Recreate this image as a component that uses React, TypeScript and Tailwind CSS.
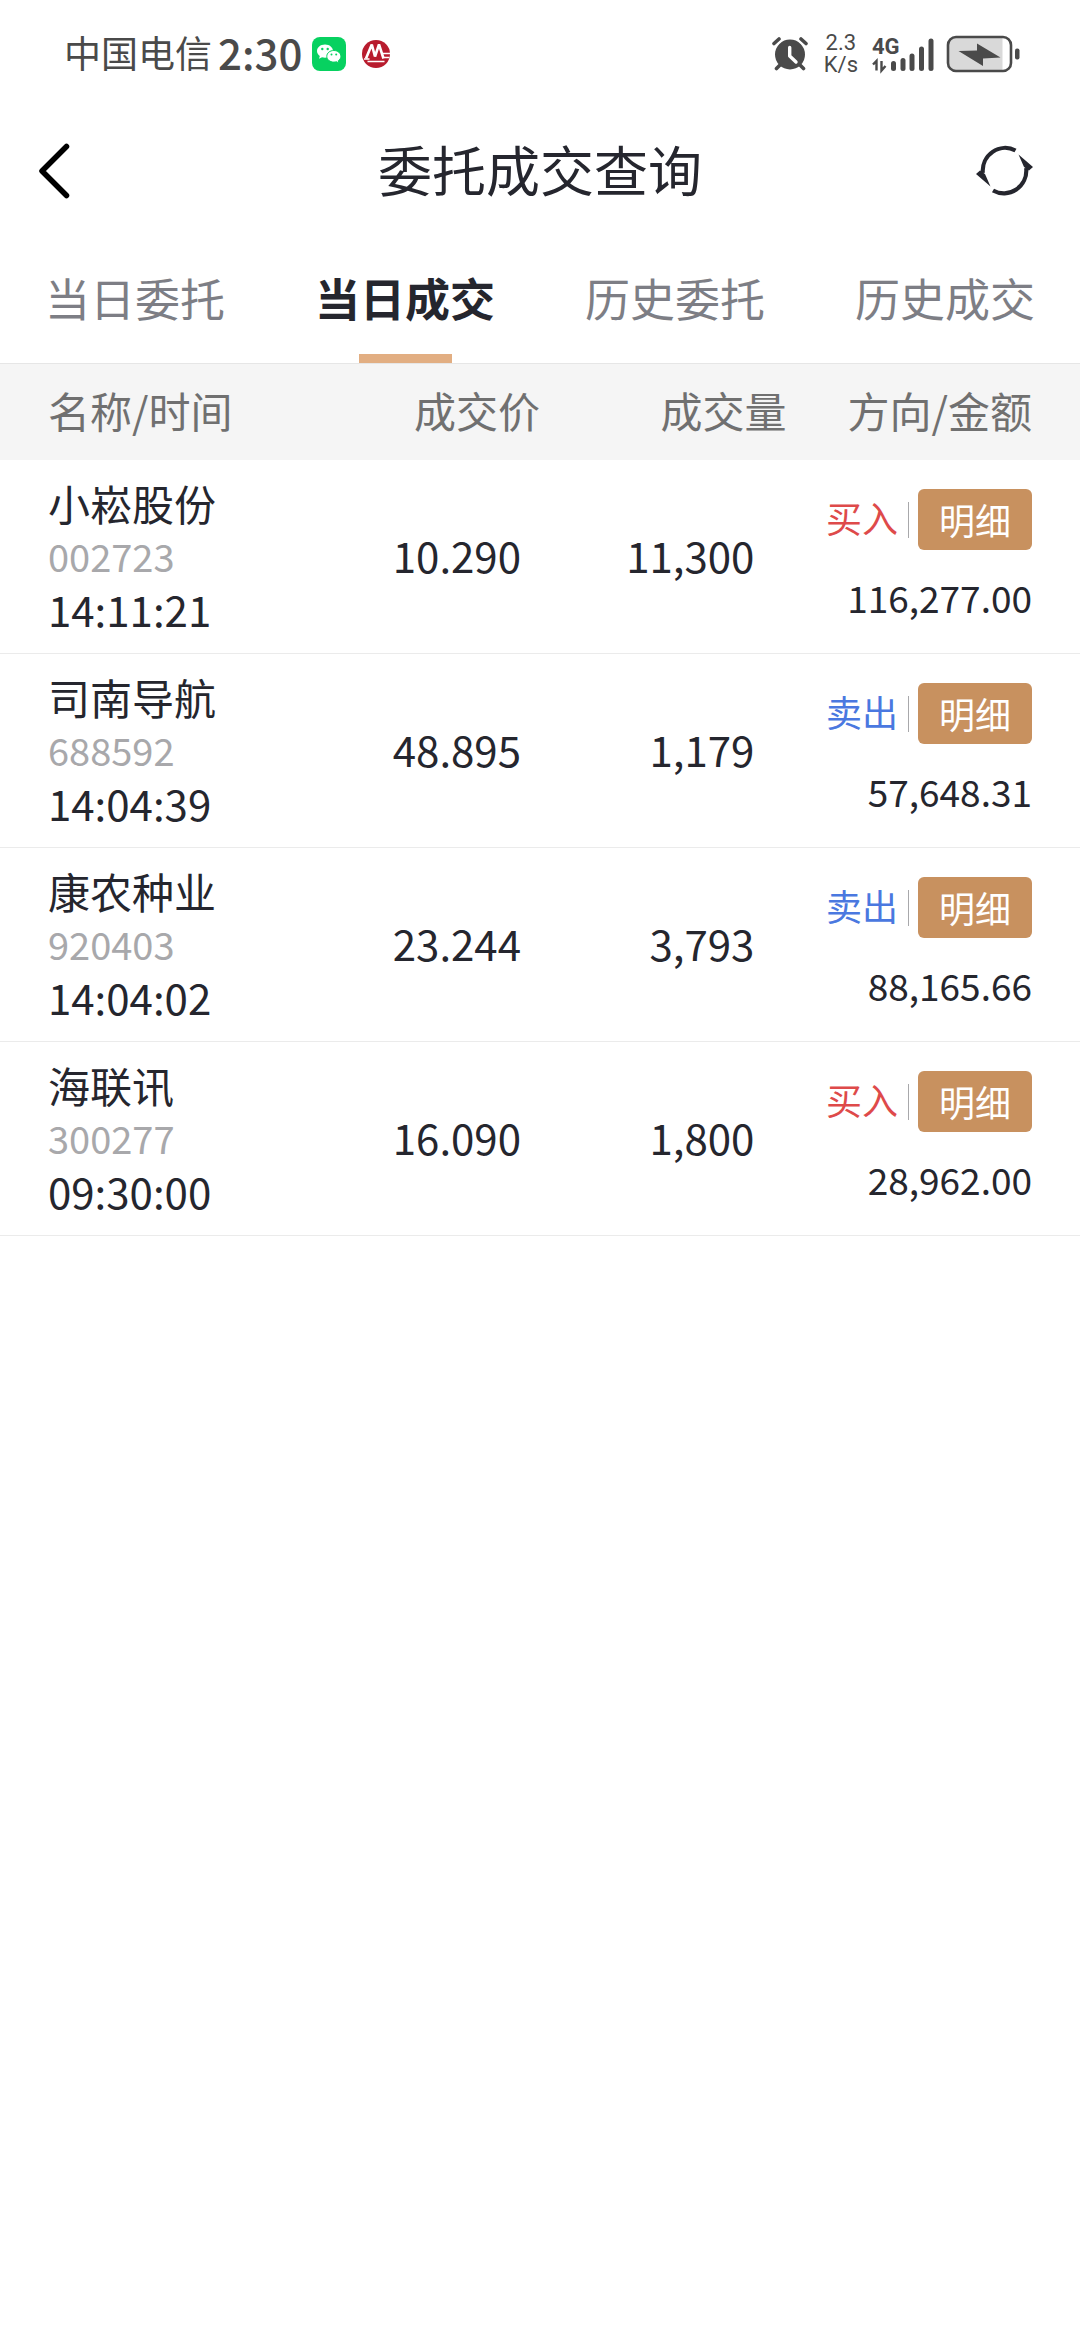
import { useState } from 'react'

type Side = 'buy' | 'sell'

interface Trade {
  name: string
  code: string
  time: string
  price: string
  volume: string
  side: Side
  amount: string
}

const TABS = ['当日委托', '当日成交', '历史委托', '历史成交']

const TRADES: Trade[] = [
  { name: '小崧股份', code: '002723', time: '14:11:21', price: '10.290', volume: '11,300', side: 'buy', amount: '116,277.00' },
  { name: '司南导航', code: '688592', time: '14:04:39', price: '48.895', volume: '1,179', side: 'sell', amount: '57,648.31' },
  { name: '康农种业', code: '920403', time: '14:04:02', price: '23.244', volume: '3,793', side: 'sell', amount: '88,165.66' },
  { name: '海联讯', code: '300277', time: '09:30:00', price: '16.090', volume: '1,800', side: 'buy', amount: '28,962.00' },
]

function WeChatIcon() {
  return (
    <svg width="34" height="34" viewBox="0 0 34 34" aria-hidden="true">
      <rect width="34" height="34" rx="8" fill="#07d160" />
      <path d="M13 7.5c-4.6 0-8 2.900-8 6.600 0 2.100 1.100 3.800 2.800 5l-.8 2.600 3-1.500c1 .3 2 .5 3 .5 4.600 0 8-2.900 8-6.600s-3.400-6.600-8-6.600z" fill="#fff" />
      <path d="M21.800 13.500c-4 0-7 2.600-7 5.800s3 5.800 7 5.800c.9 0 1.800-.1 2.600-.4l2.600 1.400-.7-2.300c1.600-1.100 2.600-2.700 2.600-4.500 0-3.200-3.100-5.800-7.100-5.800z" fill="#fff" stroke="#07d160" strokeWidth="1" />
      <circle cx="10.300" cy="12" r="1.200" fill="#07d160" />
      <circle cx="15.700" cy="12" r="1.200" fill="#07d160" />
      <circle cx="19.500" cy="17.500" r="1" fill="#07d160" />
      <circle cx="24.200" cy="17.500" r="1" fill="#07d160" />
    </svg>
  )
}

function BankIcon() {
  return (
    <svg width="28" height="28" viewBox="0 0 28 28" aria-hidden="true">
      <circle cx="14" cy="14" r="14" fill="#b81c2e" />
      <path d="M4 18.500 9.800 4.500 13 16.500 17 4.500 21.500 18.500" fill="none" stroke="#fff" strokeWidth="2.600" strokeLinejoin="bevel" />
      <path d="M2 19h5.500M5.500 21.500h17M21 13.500h7M21.500 17.500h6" stroke="#fff" strokeWidth="1.600" />
    </svg>
  )
}

function AlarmIcon() {
  return (
    <svg width="36" height="34" viewBox="0 0 36 34" fill="none" stroke="#4a4a4a" strokeLinecap="round" aria-hidden="true">
      <path d="M2 6.500 7 2M34 6.500 29 2" strokeWidth="3.600" />
      <path d="M8 28 4.500 31.500M28 28l3.500 3.500" strokeWidth="3.600" />
      <circle cx="18" cy="17.500" r="15" fill="#4a4a4a" stroke="none" />
      <path d="M17.700 10.500v8.500l6.300 6" stroke="#fff" strokeWidth="3.400" strokeLinejoin="round" />
    </svg>
  )
}

function SignalIcon() {
  return (
    <svg width="62" height="48" viewBox="0 -6 62 48" aria-hidden="true">
      <text x="0" y="18" fontFamily="Roboto, sans-serif" fontSize="22" fontWeight="700" fill="#4a4a4a">4G</text>
      <path d="M1 28.500 4.500 25v9.500M9.500 25v9.500l4-4.500" fill="none" stroke="#4a4a4a" strokeWidth="2.400" />
      <g stroke="#4a4a4a" strokeWidth="5" strokeLinecap="round">
        <path d="M21.500 27.500v5" />
        <path d="M31 24.500v8" />
        <path d="M40 20v12.500" />
        <path d="M49.500 13v19.500" />
        <path d="M59 5v27.500" />
      </g>
    </svg>
  )
}

function BatteryIcon() {
  return (
    <svg width="74" height="38" viewBox="0 0 74 38" aria-hidden="true">
      <path d="M10 2.500h46.500v33H10a7 7 0 0 1-7-7v-19a7 7 0 0 1 7-7z" fill="#d9d9d9" />
      <rect x="2" y="2" width="63" height="34" rx="8" fill="none" stroke="#4a4a4a" strokeWidth="2.600" />
      <path d="M12.500 16 31 15.500V8.500L54.500 22.500 37 23.500v7.500z" fill="#4a4a4a" />
      <rect x="69" y="13.500" width="4.500" height="11" rx="2" fill="#4a4a4a" />
    </svg>
  )
}

function StatusBar() {
  return (
    <div className="flex h-27 items-center justify-between pl-16 pr-15 text-[#4a4a4a]">
      <div className="flex items-center">
        <div className="flex items-center pb-1">
          <span className="text-[37px] leading-12">中国电信</span>
          <span className="ml-1.5 text-[42px] leading-12 font-medium">2:30</span>
        </div>
        <span className="ml-2.5"><WeChatIcon /></span>
        <span className="ml-4"><BankIcon /></span>
      </div>
      <div className="flex items-center">
        <AlarmIcon />
        <div className="ml-4 text-center font-[Roboto,sans-serif] text-[22px] leading-[22px]">
          <p>2.3</p>
          <p>K/s</p>
        </div>
        <span className="ml-3.5"><SignalIcon /></span>
        <span className="ml-3"><BatteryIcon /></span>
      </div>
    </div>
  )
}

function RefreshIcon() {
  return (
    <svg width="58" height="52" viewBox="0 0 58 52" aria-hidden="true">
      <path d="M6.800 28A22.500 23 0 0 1 39.500 5.500M17 45.500A22.500 23 0 0 0 50.200 23" fill="none" stroke="#25262e" strokeWidth="4.200" />
      <path d="M0 29 4 25.500 9 29 14.500 41.500zM57 22l-4 3.500-5-3.500-5.500-12.500z" fill="#25262e" />
    </svg>
  )
}

function TradeRow({ trade }: { trade: Trade }) {
  return (
    <tr className="border-b border-[#ebebeb]">
      <td className="pt-4 pb-[18px] pl-12 text-left text-[42px] leading-[53px]">
        <p>{trade.name}</p>
        <p className="text-[38px] leading-[53px] text-[#a8a8ab]">{trade.code}</p>
        <p>{trade.time}</p>
      </td>
      <td className="pr-[19px] pb-1 text-[42px]">{trade.price}</td>
      <td className="pr-[34px] pb-1 text-[42px]">{trade.volume}</td>
      <td className="pr-12">
        <div className="flex items-center justify-end">
          <span className={`pb-1 text-[36px] leading-[57px] ${trade.side === 'buy' ? 'text-[#de4a4a]' : 'text-[#4a78e0]'}`}>
            {trade.side === 'buy' ? '买入' : '卖出'}
          </span>
          <span className="ml-2.5 h-9 w-px bg-[#a8a8ab]" />
          <button type="button" className="ml-[9px] rounded-md bg-[#c8915f] px-[21px] text-[36px] leading-[61px] text-white">
            明细
          </button>
        </div>
        <p className="mt-5 text-[37px] leading-[54px]">{trade.amount}</p>
      </td>
    </tr>
  )
}

export default function App() {
  const [active, setActive] = useState(1)

  return (
    <div className="min-h-screen bg-white font-[Noto_Sans_CJK_SC,sans-serif] text-[#25262e]">
      <StatusBar />

      <header className="flex h-[126px] items-center justify-between pr-[46px] pl-[38px]">
        <button type="button" aria-label="返回" className="w-[66px]">
          <svg width="32" height="56" viewBox="0 0 32 56" fill="none" stroke="#000" strokeWidth="5.500" strokeLinecap="round" strokeLinejoin="round">
            <path d="M28.500 3.500 4 28l24.500 24.500" />
          </svg>
        </button>
        <h1 className="pb-1 text-[54px] leading-[60px]">委托成交查询</h1>
        <button type="button" aria-label="刷新">
          <RefreshIcon />
        </button>
      </header>

      <nav className="grid grid-cols-4 border-b border-[#e6e6e6]">
        {TABS.map((tab, i) => (
          <button
            key={tab}
            type="button"
            onClick={() => setActive(i)}
            className={`flex flex-col items-center text-[45px] leading-[60px] ${
              i === active ? 'font-bold' : 'text-[#7d7e85]'
            }`}
          >
            <span className="pt-8.5 pb-[26px]">{tab}</span>
            <span className={`h-[9px] w-[93px] ${i === active ? 'bg-[#e2ae82]' : 'bg-transparent'}`} />
          </button>
        ))}
      </nav>

      <table className="w-full table-fixed text-right">
        <thead className="bg-[#f5f5f5] text-[42px] text-[#707070]">
          <tr className="h-24">
            <th className="w-[30%] pb-1.5 pl-12 text-left font-normal">名称/时间</th>
            <th className="w-[20%] pb-1.5 font-normal">成交价</th>
            <th className="w-[23%] pr-0.5 pb-1.5 font-normal">成交量</th>
            <th className="w-[27%] pr-12 pb-1.5 font-normal">方向/金额</th>
          </tr>
        </thead>
        <tbody>
          {TRADES.map(trade => (
            <TradeRow key={trade.code} trade={trade} />
          ))}
        </tbody>
      </table>
    </div>
  )
}
